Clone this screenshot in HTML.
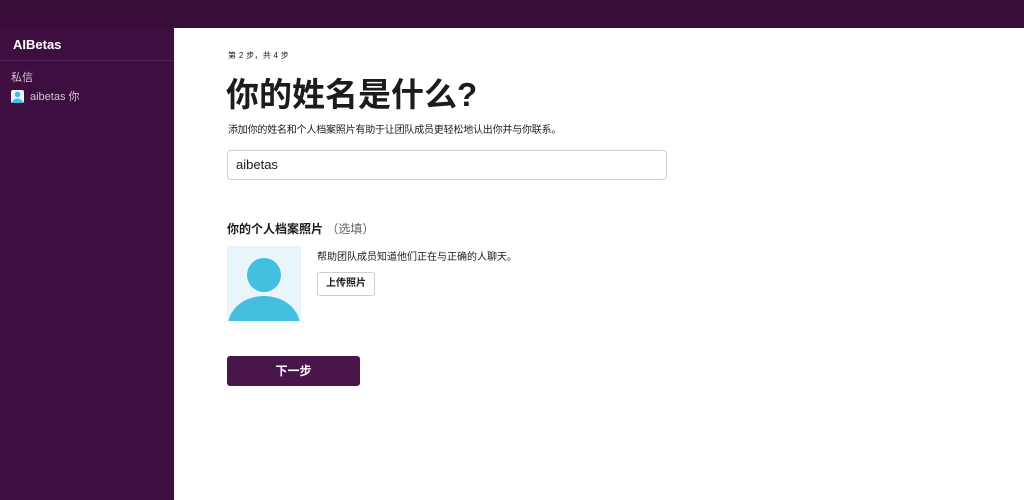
<!DOCTYPE html>
<html><head><meta charset="utf-8"><style>
*{margin:0;padding:0;box-sizing:border-box}
body{width:1024px;height:500px;overflow:hidden;background:#fff;font-family:"Liberation Sans","Noto Sans CJK SC",sans-serif;position:relative}
.top{position:absolute;left:0;top:0;width:1024px;height:28px;background:#3b0e3a}
.side{position:absolute;left:0;top:28px;width:174px;height:472px;background:#3f0e40}
.side .hd{height:33px;border-bottom:1px solid #55235a;color:#fff;font-weight:bold;font-size:13px;padding:9px 0 0 13px}
.side .lbl{position:absolute;left:11px;top:41px;color:#cfc3cf;font-size:11px}
.side .me{position:absolute;left:11px;top:60px;color:#cfc3cf;font-size:11px;display:flex;align-items:center}
.side .me i{display:inline-block;width:13px;height:13px;background:#e8f5fa;border-radius:2px;margin-right:6px;position:relative;overflow:hidden}
.abs{position:absolute}
</style></head><body>
<div class="top"></div>
<div class="side"><div class="hd">AIBetas</div><div class="lbl">私信</div>
<div class="me"><i><svg width="13" height="13" viewBox="0 0 13 13"><circle cx="6.5" cy="4.5" r="2.8" fill="#45bfe0"/><ellipse cx="6.5" cy="13" rx="5.5" ry="4.5" fill="#45bfe0"/></svg></i>aibetas&nbsp;你</div></div>
<div class="abs" style="left:228px;top:50px;font-size:8px;color:#1d1c1d;letter-spacing:0.3px">第 2 步，共 4 步</div>
<div class="abs" style="left:226px;top:72px;font-size:33px;font-weight:bold;color:#1d1c1d;line-height:46px">你的姓名是什么?</div>
<div class="abs" style="left:228px;top:121px;font-size:10px;color:#1d1c1d;letter-spacing:-0.2px">添加你的姓名和个人档案照片有助于让团队成员更轻松地认出你并与你联系。</div>
<div class="abs" style="left:227px;top:150px;width:440px;height:30px;border:1px solid #cfcfcf;border-radius:4px;font-size:13px;color:#1d1c1d;padding:6px 0 0 8px">aibetas</div>
<div class="abs" style="left:227px;top:220px;font-size:12px;font-weight:bold;color:#1d1c1d">你的个人档案照片 <span style="font-weight:normal;color:#616061">（选填）</span></div>
<div class="abs" style="left:227px;top:246px;width:74px;height:75px;background:#e8f5fa;overflow:hidden"><svg width="74" height="75" viewBox="0 0 74 75"><circle cx="37" cy="29" r="17" fill="#45bfe0"/><ellipse cx="37" cy="80" rx="36" ry="30" fill="#45bfe0"/></svg></div>
<div class="abs" style="left:317px;top:248px;font-size:10px;color:#1d1c1d">帮助团队成员知道他们正在与正确的人聊天。</div>
<div class="abs" style="left:317px;top:272px;width:58px;height:24px;border:1px solid #cfcfcf;border-radius:3px;font-size:10px;font-weight:bold;color:#1d1c1d;text-align:center;line-height:22px">上传照片</div>
<div class="abs" style="left:227px;top:356px;width:133px;height:30px;background:#4a154b;border-radius:3px;font-size:12px;font-weight:bold;color:#fff;text-align:center;line-height:30px">下一步</div>
</body></html>
